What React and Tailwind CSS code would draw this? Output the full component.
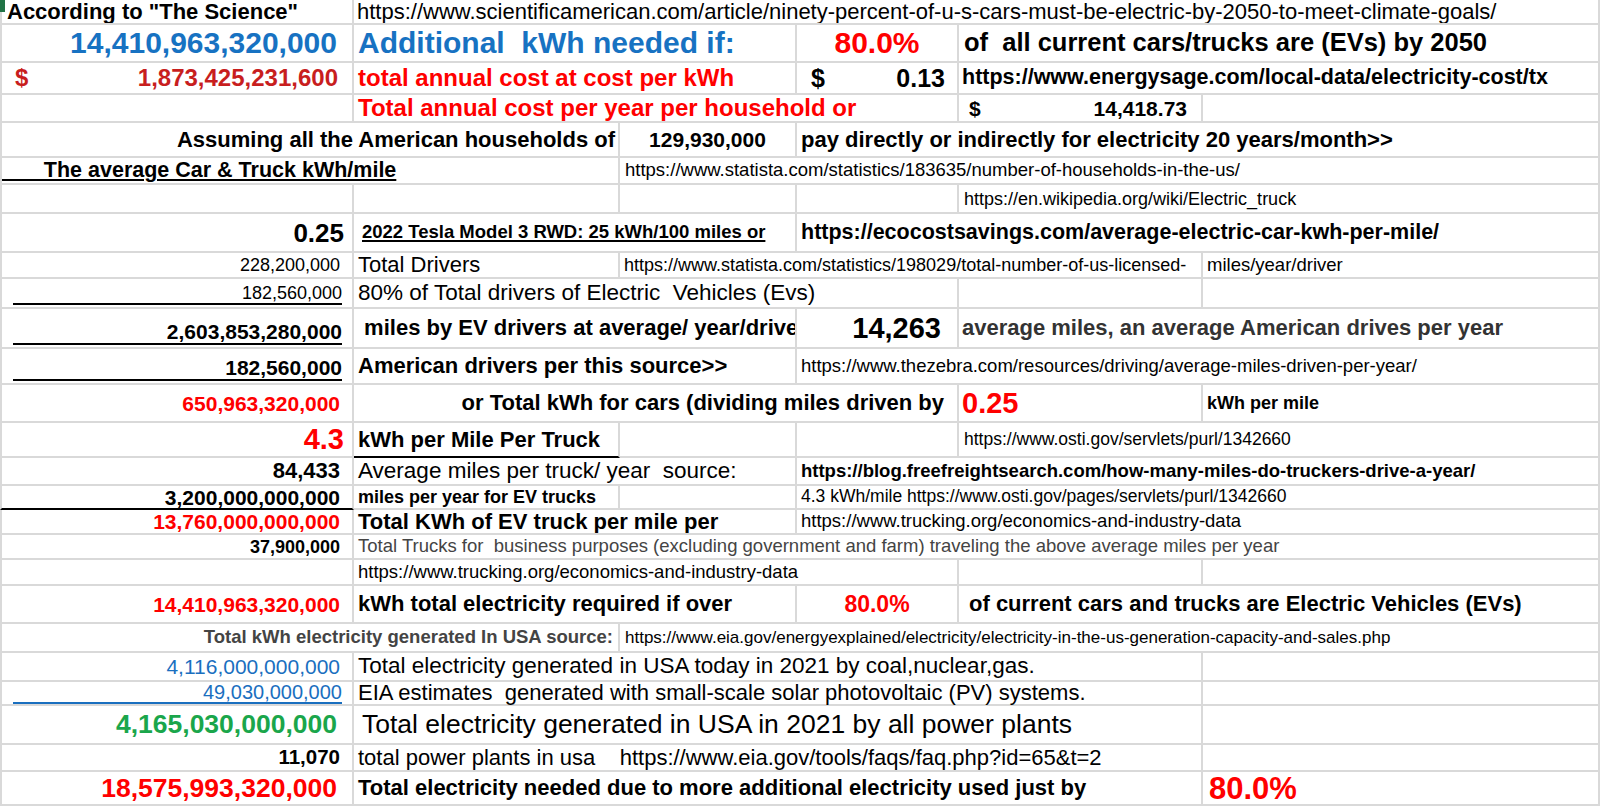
import React from 'react';

const SPAN = {
  1: 'col-span-1',
  2: 'col-span-2',
  3: 'col-span-3',
  4: 'col-span-4',
  5: 'col-span-5',
};

function Row({ h, children }) {
  return (
    <div className={`grid grid-cols-[354px_266px_177px_162px_244px_397px] ${h}`}>
      {children}
    </div>
  );
}

// one spreadsheet cell; span = merged / overflowed columns
function C({ span = 1, first, clip = true, v = 'items-center', bb = 'border-b-[#d9d9d9]', className = '', children }) {
  return (
    <div
      className={`${SPAN[span]} ${first ? 'border-l-2 border-l-[#d9d9d9]' : ''} ${clip ? 'overflow-hidden' : 'overflow-visible'} flex ${v} min-w-0 whitespace-pre leading-none border-r-2 border-b-2 border-r-[#d9d9d9] ${bb} ${className}`}
    >
      {children}
    </div>
  );
}

// number with an accounting underline under it
function Under({ color = 'border-black', pad = 'pb-[2px]', className = '', children }) {
  return (
    <C first v="items-end" className={pad}>
      <div className={`ml-[11px] mr-[10px] w-full border-b-2 ${color} text-right ${className}`}>{children}</div>
    </C>
  );
}

export default function App() {
  return (
    <div className="relative w-[1600px] h-[806px] overflow-hidden bg-white text-black font-['Liberation_Sans',Arial,sans-serif]">
      <div className="absolute left-0 top-0 w-[5px] h-[12px] bg-[#217346]" />

      <Row h="h-[25px]">
        <C first className="pl-[5px] text-[22px] font-bold">According to "The Science"</C>
        <C span={5} className="pl-[3px] text-[22px]">https://www.scientificamerican.com/article/ninety-percent-of-u-s-cars-must-be-electric-by-2050-to-meet-climate-goals/</C>
      </Row>

      <Row h="h-[38px]">
        <C first className="justify-end pr-[15px] text-[30px] font-bold text-[#1772c2]">14,410,963,320,000</C>
        <C span={2} className="pl-1 text-[30px] font-bold text-[#1772c2]">{'Additional  kWh needed if:'}</C>
        <C className="justify-center text-[30px] font-bold text-[#ff0000]">80.0%</C>
        <C span={2} className="pl-[5px] text-[25.5px] font-bold">{'of  all current cars/trucks are (EVs) by 2050'}</C>
      </Row>

      <Row h="h-[32px]">
        <C first className="justify-between pl-[13px] pr-[14px] text-[24px] font-bold text-[#c81e1e]">
          <span>$</span>
          <span>1,873,425,231,600</span>
        </C>
        <C span={2} className="pl-1 text-[24px] font-bold text-[#ff0000]">total annual cost at cost per kWh</C>
        <C className="justify-between pl-[14px] pr-[12px] text-[25px] font-bold">
          <span>$</span>
          <span>0.13</span>
        </C>
        <C span={2} className="pl-[3px] text-[21.5px] font-bold">https://www.energysage.com/local-data/electricity-cost/tx</C>
      </Row>

      <Row h="h-[28px]">
        <C first />
        <C span={3} className="pl-1 text-[24px] font-bold text-[#ff0000]">Total annual cost per year per household or</C>
        <C className="justify-between pl-[10px] pr-[14px] text-[21px] font-bold">
          <span>$</span>
          <span>14,418.73</span>
        </C>
        <C />
      </Row>

      <Row h="h-[35px]">
        <C first span={2} className="justify-end pr-[3px] text-[22px] font-bold">Assuming all the American households of</C>
        <C className="justify-center text-[21px] font-bold">129,930,000</C>
        <C span={3} className="pl-1 text-[22px] font-bold">pay directly or indirectly for electricity 20 years/month&gt;&gt;</C>
      </Row>

      <Row h="h-[27px]">
        <C first span={2} className="text-[21.5px] font-bold">
          <span className="underline decoration-2 underline-offset-2">{'\u00a0\u00a0\u00a0\u00a0\u00a0\u00a0\u00a0The average Car & Truck kWh/mile'}</span>
        </C>
        <C span={4} className="pl-[5px] text-[18.5px]">https://www.statista.com/statistics/183635/number-of-households-in-the-us/</C>
      </Row>

      <Row h="h-[29px]">
        <C first />
        <C />
        <C />
        <C />
        <C span={2} className="pl-[5px] text-[18px]">https://en.wikipedia.org/wiki/Electric_truck</C>
      </Row>

      <Row h="h-[39px]">
        <C first className="justify-end pr-2 text-[26px] font-bold">0.25</C>
        <C span={2} className="pl-2 text-[18.5px] font-bold">
          <span className="underline decoration-2 underline-offset-2">2022 Tesla Model 3 RWD: 25 kWh/100 miles or</span>
        </C>
        <C span={3} className="pl-1 text-[21.5px] font-bold">https://ecocostsavings.com/average-electric-car-kwh-per-mile/</C>
      </Row>

      <Row h="h-[26px]">
        <C first className="justify-end pr-3 text-[18px]">228,200,000</C>
        <C className="pl-1 text-[22px]">Total Drivers</C>
        <C span={3} className="pl-[4px] text-[18px]">https://www.statista.com/statistics/198029/total-number-of-us-licensed-</C>
        <C className="pl-1 text-[18.5px]">miles/year/driver</C>
      </Row>

      <Row h="h-[30px]">
        <Under className="text-[18px] pb-[1px]">182,560,000</Under>
        <C span={3} className="pl-1 text-[22.5px]">{'80% of Total drivers of Electric  Vehicles (Evs)'}</C>
        <C />
        <C />
      </Row>

      <Row h="h-[40px]">
        <Under className="text-[21px] font-bold pb-[1px]">2,603,853,280,000</Under>
        <C span={2} className="pl-1 text-[22px] font-bold">{' miles by EV drivers at average/ year/drive'}</C>
        <C className="justify-end pr-4 text-[29px] font-bold">14,263</C>
        <C span={2} className="pl-[3px] text-[22px] font-bold text-[#333333]">average miles, an average American drives per year</C>
      </Row>

      <Row h="h-[36px]">
        <Under className="text-[21px] font-bold pb-[1px]">182,560,000</Under>
        <C span={2} className="pl-1 text-[22px] font-bold">American drivers per this source&gt;&gt;</C>
        <C span={3} className="pl-1 text-[18.5px]">https://www.thezebra.com/resources/driving/average-miles-driven-per-year/</C>
      </Row>

      <Row h="h-[38px]">
        <C first className="justify-end pr-3 text-[21px] font-bold text-[#ff0000]">650,963,320,000</C>
        <C span={3} className="justify-end pr-[13px] text-[22px] font-bold">or Total kWh for cars (dividing miles driven by</C>
        <C className="pl-[3px] text-[29px] font-bold text-[#ff0000]">0.25</C>
        <C className="pl-1 text-[18px] font-bold">kWh per mile</C>
      </Row>

      <Row h="h-[35px]">
        <C first className="justify-end pr-2 text-[29px] font-bold text-[#ff0000]">4.3</C>
        <C bb="border-b-black" className="pl-1 text-[22px] font-bold">kWh per Mile Per Truck</C>
        <C />
        <C />
        <C span={2} className="pl-[5px] text-[17.5px]">https://www.osti.gov/servlets/purl/1342660</C>
      </Row>

      <Row h="h-[28px]">
        <C first className="justify-end pr-3 text-[22px] font-bold">84,433</C>
        <C span={2} className="pl-1 text-[22.5px]">{'Average miles per truck/ year  source:'}</C>
        <C span={3} className="pl-1 text-[18.5px] font-bold">https://blog.freefreightsearch.com/how-many-miles-do-truckers-drive-a-year/</C>
      </Row>

      <Row h="h-[24px]">
        <C first bb="border-b-black" className="justify-end pr-3 text-[21px] font-bold">3,200,000,000,000</C>
        <C className="pl-1 text-[18px] font-bold">miles per year for EV trucks</C>
        <C />
        <C span={3} className="pl-1 text-[17.5px]">4.3 kWh/mile https://www.osti.gov/pages/servlets/purl/1342660</C>
      </Row>

      <Row h="h-[25px]">
        <C first className="justify-end pr-3 text-[21px] font-bold text-[#ff0000]">13,760,000,000,000</C>
        <C span={2} className="pl-1 text-[22px] font-bold">Total KWh of EV truck per mile per</C>
        <C span={3} className="pl-1 text-[18.5px]">https://www.trucking.org/economics-and-industry-data</C>
      </Row>

      <Row h="h-[25px]">
        <C first className="justify-end pr-3 text-[18px] font-bold">37,900,000</C>
        <C span={5} className="pl-1 text-[18.5px] text-[#444444]">{'Total Trucks for  business purposes (excluding government and farm) traveling the above average miles per year'}</C>
      </Row>

      <Row h="h-[26px]">
        <C first />
        <C span={3} className="pl-1 text-[18.5px]">https://www.trucking.org/economics-and-industry-data</C>
        <C />
        <C />
      </Row>

      <Row h="h-[38px]">
        <C first className="justify-end pr-3 text-[21px] font-bold text-[#ff0000]">14,410,963,320,000</C>
        <C span={2} className="pl-1 text-[22px] font-bold">kWh total electricity required if over</C>
        <C className="justify-center text-[23px] font-bold text-[#ff0000]">80.0%</C>
        <C span={2} className="pl-[10px] text-[22px] font-bold">of current cars and trucks are Electric Vehicles (EVs)</C>
      </Row>

      <Row h="h-[29px]">
        <C first span={2} className="justify-end pr-[5px] text-[18.5px] font-bold text-[#444444]">Total kWh electricity generated In USA source:</C>
        <C span={4} className="pl-[5px] text-[17px]">https://www.eia.gov/energyexplained/electricity/electricity-in-the-us-generation-capacity-and-sales.php</C>
      </Row>

      <Row h="h-[29px]">
        <C first className="justify-end pr-3 text-[21px] text-[#1a6fbf]">4,116,000,000,000</C>
        <C span={4} className="pl-1 text-[22.5px]">Total electricity generated in USA today in 2021 by coal,nuclear,gas.</C>
        <C />
      </Row>

      <Row h="h-[24px]">
        <Under color="border-[#1a6fbf]" pad="pb-0" className="text-[20px] text-[#1a6fbf]">49,030,000,000</Under>
        <C span={4} clip={false} className="pl-1 text-[22px]">{'EIA estimates  generated with small-scale solar photovoltaic (PV) systems.'}</C>
        <C />
      </Row>

      <Row h="h-[39px]">
        <C first className="justify-end pr-[15px] text-[26.5px] font-bold text-[#1aa64b]">4,165,030,000,000</C>
        <C span={4} className="pl-2 text-[26.5px]">Total electricity generated in USA in 2021 by all power plants</C>
        <C />
      </Row>

      <Row h="h-[27px]">
        <C first className="justify-end pr-3 text-[20.5px] font-bold">11,070</C>
        <C span={4} className="pl-1 text-[22px]">{'total power plants in usa    https://www.eia.gov/tools/faqs/faq.php?id=65&t=2'}</C>
        <C />
      </Row>

      <Row h="h-[34px]">
        <C first className="justify-end pr-[15px] text-[26.5px] font-bold text-[#ff0000]">18,575,993,320,000</C>
        <C span={4} className="pl-1 text-[22px] font-bold">Total electricity needed due to more additional electricity used just by</C>
        <C className="pl-[6px] text-[31px] font-bold text-[#ff0000]">80.0%</C>
      </Row>
    </div>
  );
}
